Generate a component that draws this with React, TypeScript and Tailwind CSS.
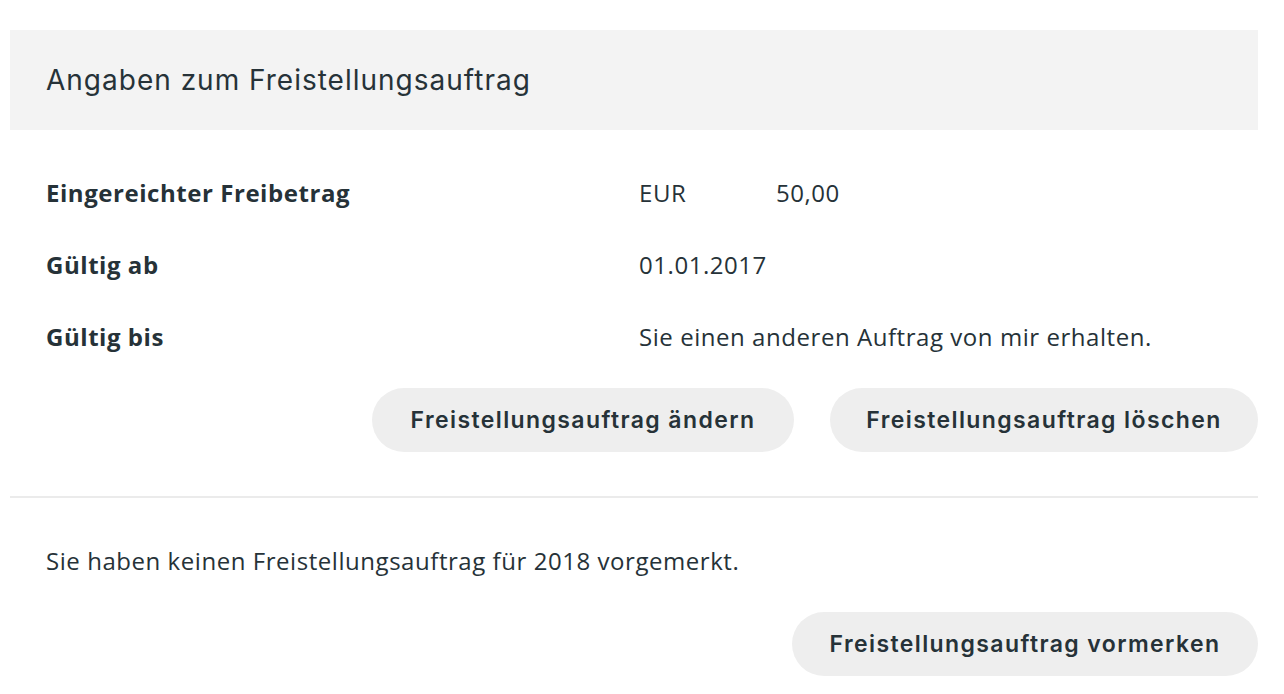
import React from "react";

const open = { fontFamily: '"Open Sans", sans-serif' };
const geo = { fontFamily: 'Inter, "Open Sans", sans-serif' };

function Btn({ children, w }: { children: React.ReactNode; w: string }) {
  return (
    <button
      className={`h-[64px] ${w} rounded-full bg-[#eeeeee] text-[#263238] text-[23px] font-semibold tracking-[1.4px] flex items-center justify-center`}
      style={geo}
    >
      {children}
    </button>
  );
}

function Row({ label, children }: { label: string; children: React.ReactNode }) {
  return (
    <div className="h-[72px] flex items-center pl-[36px]">
      <div className="w-[593px] text-[24px] font-bold tracking-[0.55px] text-[#263238]" style={open}>
        {label}
      </div>
      <div className="text-[24px] tracking-[0.55px] text-[#263238] flex" style={open}>
        {children}
      </div>
    </div>
  );
}

export default function App() {
  return (
    <div className="w-[1284px] h-[694px] bg-white pl-[10px] pr-[26px] pt-[30px] overflow-hidden">
      <div className="h-[100px] bg-[#f3f3f3] flex items-center px-[36px]">
        <h2 className="text-[28px] text-[#263238] tracking-[1px]" style={geo}>
          Angaben zum Freistellungsauftrag
        </h2>
      </div>
      <div className="mt-[27px]">
        <Row label="Eingereichter Freibetrag">
          <span className="w-[137px]">EUR</span>
          <span>50,00</span>
        </Row>
        <Row label="Gültig ab">01.01.2017</Row>
        <Row label="Gültig bis">Sie einen anderen Auftrag von mir erhalten.</Row>
      </div>
      <div className="mt-[15px] flex justify-end gap-[36px]">
        <Btn w="w-[422px]">Freistellungsauftrag ändern</Btn>
        <Btn w="w-[428px]">Freistellungsauftrag löschen</Btn>
      </div>
      <div className="mt-[44px] h-[2px] bg-[#ebebeb]" />
      <div className="mt-[27px] h-[72px] flex items-center pl-[36px] text-[24px] tracking-[0.55px] text-[#263238]" style={open}>
        Sie haben keinen Freistellungsauftrag für 2018 vorgemerkt.
      </div>
      <div className="mt-[15px] flex justify-end">
        <Btn w="w-[466px]">Freistellungsauftrag vormerken</Btn>
      </div>
    </div>
  );
}
